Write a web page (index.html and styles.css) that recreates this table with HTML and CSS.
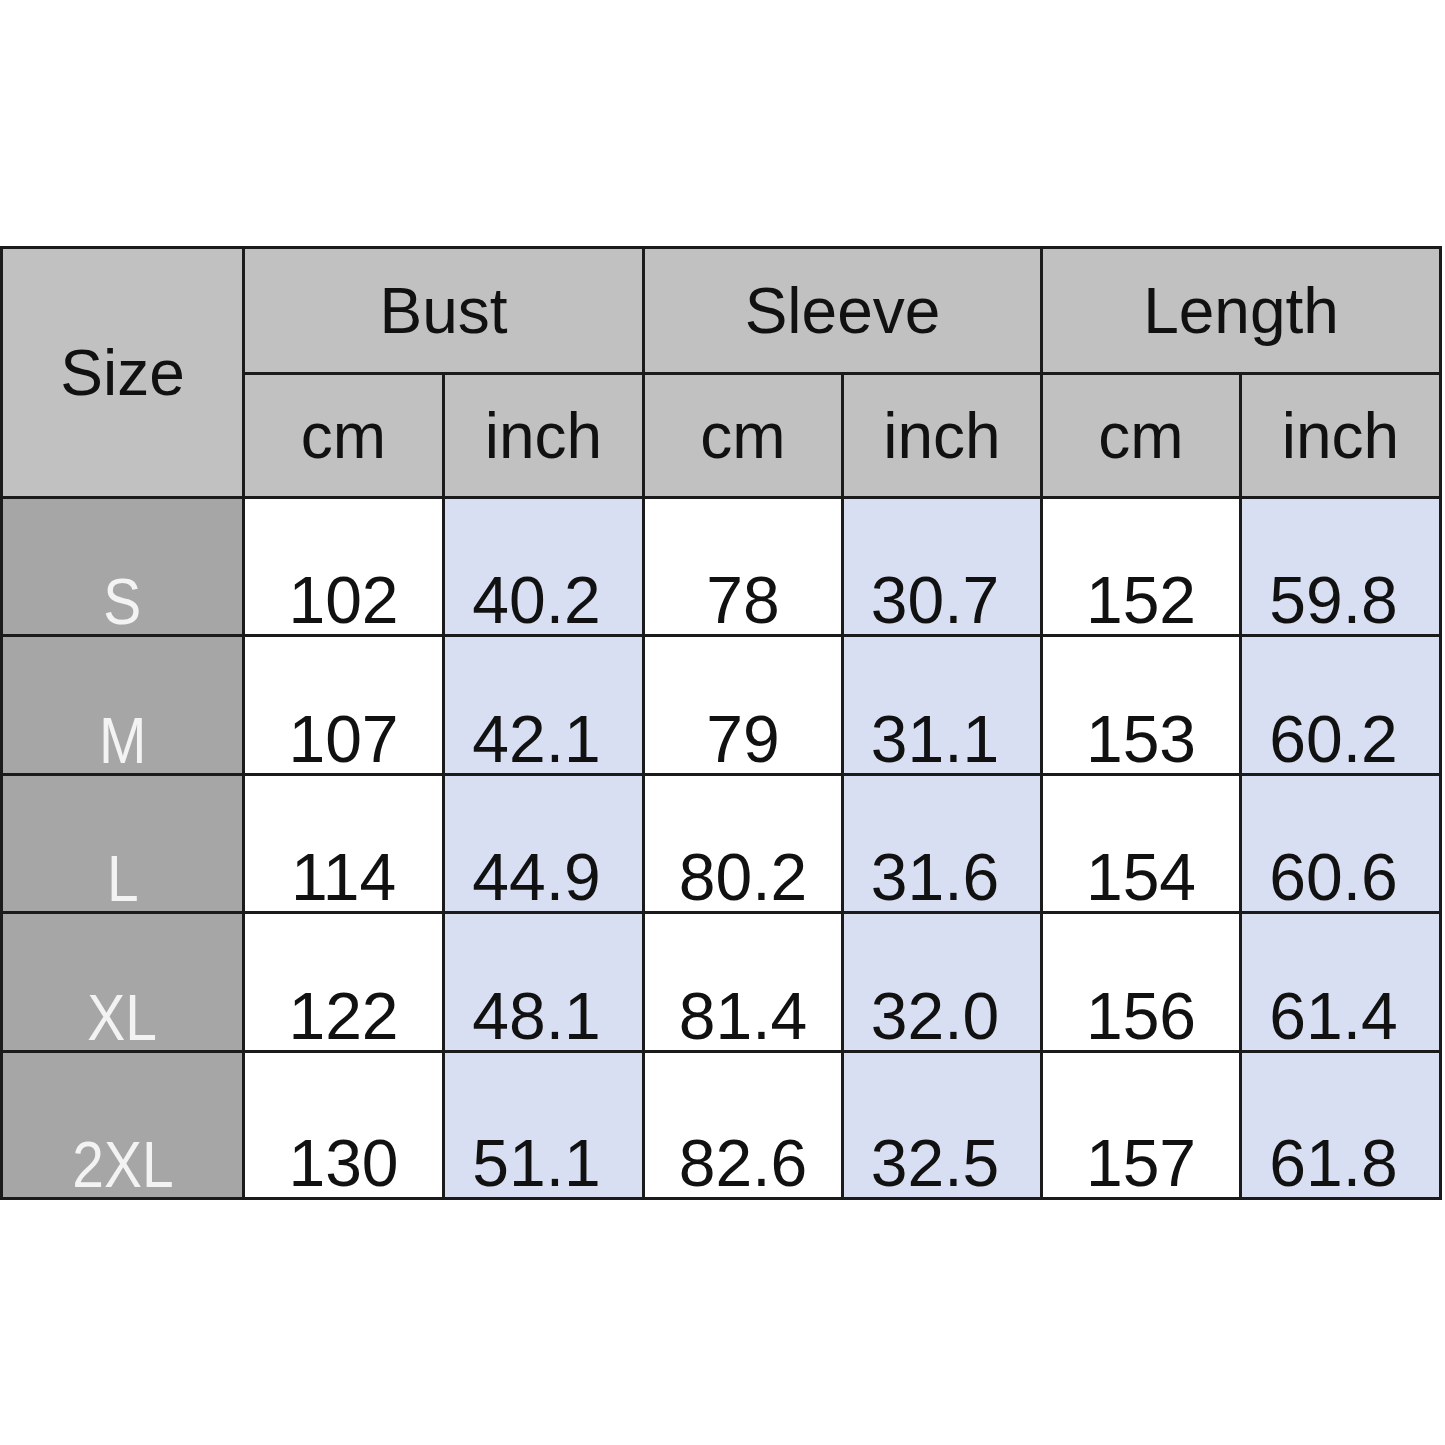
FILE: index.html
```html
<!DOCTYPE html>
<html>
<head>
<meta charset="utf-8">
<link rel="stylesheet" href="styles.css">
</head>
<body>
<div class="chart">
  <div class="cell head size-head">Size</div>
  <div class="cell head group">Bust</div>
  <div class="cell head group">Sleeve</div>
  <div class="cell head group">Length</div>
  <div class="cell head">cm</div>
  <div class="cell head">inch</div>
  <div class="cell head">cm</div>
  <div class="cell head">inch</div>
  <div class="cell head">cm</div>
  <div class="cell head">inch</div>

  <div class="cell label"><span class="label-text">S</span></div>
  <div class="cell num">102</div><div class="cell num inch">40.2</div>
  <div class="cell num">78</div><div class="cell num inch">30.7</div>
  <div class="cell num">152</div><div class="cell num inch">59.8</div>

  <div class="cell label"><span class="label-text">M</span></div>
  <div class="cell num">107</div><div class="cell num inch">42.1</div>
  <div class="cell num">79</div><div class="cell num inch">31.1</div>
  <div class="cell num">153</div><div class="cell num inch">60.2</div>

  <div class="cell label"><span class="label-text">L</span></div>
  <div class="cell num">114</div><div class="cell num inch">44.9</div>
  <div class="cell num">80.2</div><div class="cell num inch">31.6</div>
  <div class="cell num">154</div><div class="cell num inch">60.6</div>

  <div class="cell label"><span class="label-text">XL</span></div>
  <div class="cell num">122</div><div class="cell num inch">48.1</div>
  <div class="cell num">81.4</div><div class="cell num inch">32.0</div>
  <div class="cell num">156</div><div class="cell num inch">61.4</div>

  <div class="cell label"><span class="label-text">2XL</span></div>
  <div class="cell num">130</div><div class="cell num inch">51.1</div>
  <div class="cell num">82.6</div><div class="cell num inch">32.5</div>
  <div class="cell num">157</div><div class="cell num inch">61.8</div>
</div>
</body>
</html>
```

FILE: styles.css
```css
html, body {
  margin: 0;
  padding: 0;
  background: #ffffff;
}

.chart {
  margin-top: 246px;
  width: 1436px;
  display: grid;
  grid-template-columns: 239px 197px 197px 196px 196px 196px 197px;
  grid-template-rows: 123px 121px 135px 136px 135px 136px 144px;
  gap: 3px;
  padding: 3px;
  background: #1b1b1b;
  font-family: "Liberation Sans", Arial, sans-serif;
  color: #111111;
}

.cell {
  display: flex;
  justify-content: center;
  background: #ffffff;
  font-size: 66px;
  line-height: 1;
}

.head {
  background: #c1c1c1;
  align-items: center;
  font-size: 64px;
}

.size-head {
  grid-row: span 2;
}

.group {
  grid-column: span 2;
}

.label {
  background: #a6a6a6;
  color: #f3f3f3;
  align-items: flex-end;
  font-size: 64px;
}

.label-text {
  display: inline-block;
  transform: scaleX(0.89);
}

.num {
  align-items: flex-end;
  padding-bottom: 1px;
}

.inch {
  background: #d9dff2;
  padding-right: 14px;
}
```
